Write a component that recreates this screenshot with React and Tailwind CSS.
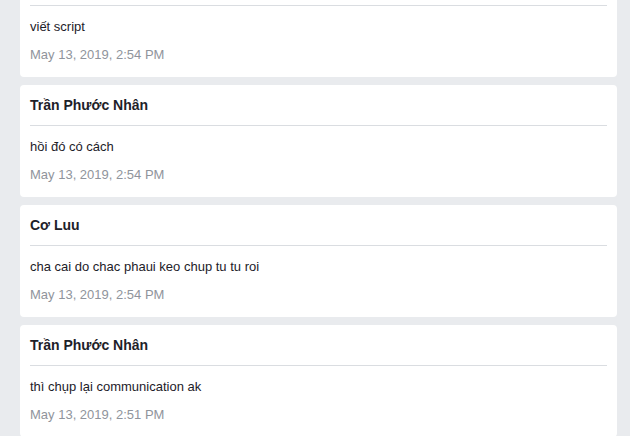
import React from 'react';

const comments = [
  { name: 'Cơ Luu', text: 'viết script', time: 'May 13, 2019, 2:54 PM' },
  { name: 'Trần Phước Nhân', text: 'hồi đó có cách', time: 'May 13, 2019, 2:54 PM' },
  { name: 'Cơ Luu', text: 'cha cai do chac phaui keo chup tu tu roi', time: 'May 13, 2019, 2:54 PM' },
  { name: 'Trần Phước Nhân', text: 'thì chụp lại communication ak', time: 'May 13, 2019, 2:51 PM' },
];

const CommentCard = ({ comment }) => (
  <div className="bg-white rounded-[4px] px-[10px] pb-[12px]">
    <div className="h-[41px] flex items-center border-b border-[#dadde1]">
      <span className="text-[14px] font-bold text-[#1d2129] leading-5">{comment.name}</span>
    </div>
    <p className="pt-[11px] text-[13px] leading-5 text-[#1d2129]">{comment.text}</p>
    <p className="mt-2 text-[13px] leading-5 text-[#90949c]">{comment.time}</p>
  </div>
);

const App = () => {
  return (
    <div
      className="h-[436px] overflow-hidden bg-[#e9ebee]"
      style={{ fontFamily: '"Liberation Sans", Arial, sans-serif' }}
    >
      {/* Comment list, scrolled partway */}
      <div className="-mt-[35px] pl-5 pr-[13px] flex flex-col gap-2">
        {comments.map((c, i) => (
          <CommentCard key={i} comment={c} />
        ))}
      </div>
    </div>
  );
};

export default App;
